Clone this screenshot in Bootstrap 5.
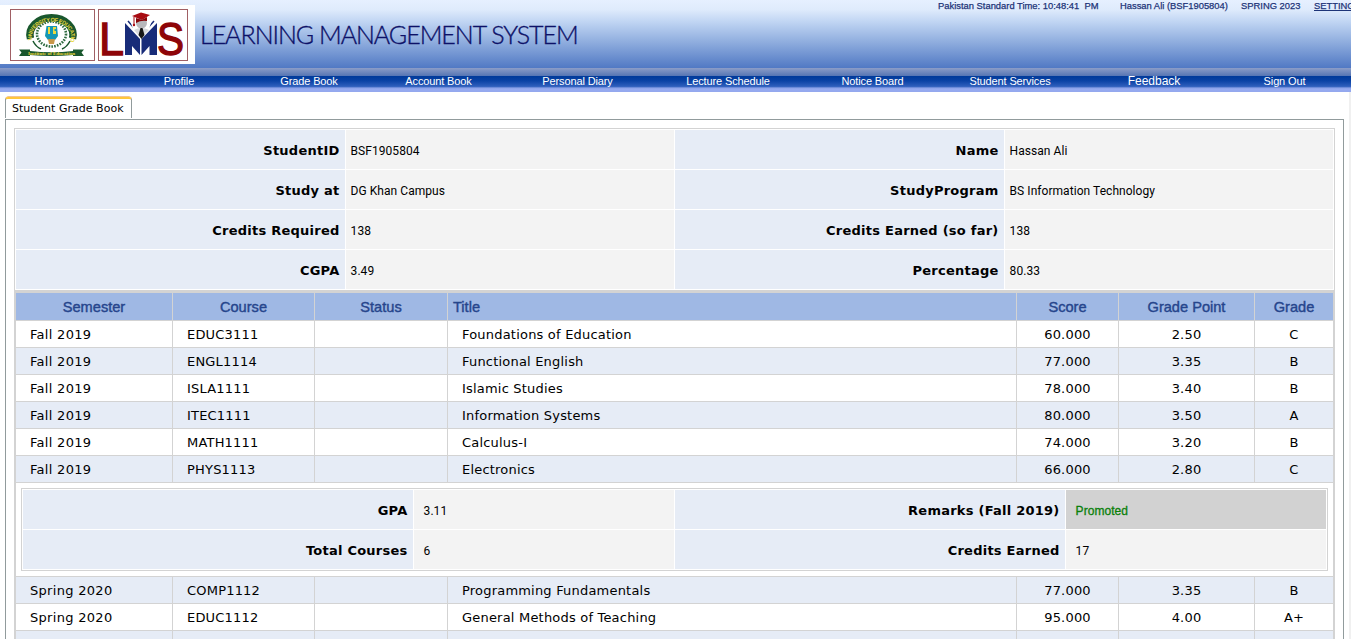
<!DOCTYPE html>
<html lang="en">
<head>
<meta charset="utf-8">
<title>Learning Management System</title>
<link href="https://cdn.jsdelivr.net/npm/bootstrap@5.3.0/dist/css/bootstrap.min.css" rel="stylesheet">
<style>
html,body{height:639px;overflow:hidden}
body{font-family:"DejaVu Sans",sans-serif;font-size:13px;color:#000;background:#fff}
.top-banner{height:68px;background:linear-gradient(#e6f0ff 0,#dfebfc 14%,#c0d5f3 32%,#8fadde 62%,#5179c4 100%)}
.logo-strip{width:195px;height:59px;margin-top:5px;padding:4px 0 0 10px;gap:3px}
.logo-frame{height:52px;border:1px solid #a05f64}
.logo-frame svg{overflow:visible}
.site-title{font:300 25px/30px Lato,sans-serif;color:#0d1168;margin:19px 0 0 5px;letter-spacing:-1.02px;-webkit-text-stroke:.35px #0d1168}
.session-info{font:9.4px/12px "Liberation Sans",sans-serif;color:#1d3478;width:413px;overflow:hidden;-webkit-text-stroke:.25px #1d3478}
.session-info span{flex:none}
.menu-shade{height:8px;background:linear-gradient(#8c9dc8,#5575b4)}
.main-menu{height:16px;background:linear-gradient(#003a9a 0,#0a42a5 30%,#2f5fbd 65%,#7f99e2 74%,#96aaf0 80%,#94a8ee 100%);font:11px/10px "Liberation Sans",sans-serif;letter-spacing:-.13px;color:#fff}
.main-menu a{color:#fff;text-decoration:none;text-align:center;flex:none}
.page-body{height:547px;padding:5px 5px 0 5px;border-right:2px solid #f0f0f0;overflow:hidden}
.tab-item{width:127px;height:21px;border:1px solid #919b9c;border-top:2px solid #ffc73c;border-bottom:0;border-radius:3px 3px 0 0;font-size:11px;line-height:19px;padding-left:6px;letter-spacing:.02px;box-shadow:0 -1px 0 -0.4px #e68b2c}
.tab-panel{width:1339px;height:560px;margin-top:1px;border:1px solid #919b9c;padding:8px}
.student-card{width:1321px;border:1px solid #d3d3d3;border-bottom:0;padding:1px 0 1px 1px}
.info-grid{display:grid;grid-template-columns:329px 328px 329px 328px;column-gap:1px;row-gap:1px;grid-auto-rows:39px}
.info-grid>*{display:flex;align-items:center;padding:3px 5px 0}
.lab{background:#e6ecf6;justify-content:flex-end;font-weight:700;letter-spacing:.24px}
.val{background:#f3f3f3;font:12px Roboto,sans-serif;letter-spacing:.05px}
.info-grid>.lab{padding-right:5.5px}
.info-grid>.val{padding-left:4.6px}
.grades{width:1321px;border-left:2px solid #d3d3d3;border-right:2px solid #d3d3d3;border-top:3px solid #d3d3d3}
.grow{display:grid;grid-template-columns:157px 142px 133px 569px 102px 136px 78px;height:27px;border-bottom:1px solid #d3d3d3;letter-spacing:.2px}
.grow>*{border-right:1px solid #d3d3d3;line-height:28px;height:26px;text-align:center}
.grow>:last-child{border-right:0}
.grow>:nth-child(-n+4){text-align:left;padding-left:14px}
.grow>:nth-child(1){letter-spacing:.3px}
.grow.alt{background:#e6ecf6}
.grow.ghead{height:28px;background:#9fb8e4;color:#26458c;font:14.6px "Liberation Sans",sans-serif;letter-spacing:0;-webkit-text-stroke:.4px #26458c}
.grow.ghead>*{line-height:28px;height:27px;text-align:center;padding-left:0;letter-spacing:0}
.grow.ghead>:nth-child(4){text-align:left;padding-left:5px}
.sem-wrap{padding:5px;height:94px;border-bottom:1px solid #d3d3d3}
.sem-box{border:1px solid #d3d3d3;padding:1px;height:83px}
.sem-box .info-grid{grid-template-columns:390px 260px 390px 260px}
.sem-box .info-grid>.val{padding-left:9.6px}
.promo{background:#d2d2d2!important;color:#0a800a;-webkit-text-stroke:.3px #0a800a;font-family:"Liberation Sans",sans-serif!important}
</style>
</head>
<body>
<header class="top-banner d-flex">
  <div class="logo-strip bg-white d-flex">
    <div class="logo-frame" style="width:85px">
      <svg width="83" height="50" viewBox="0 0 83 50" class="d-block">
        <path d="M19.500 28.500A21.500 17 0 1 1 61.500 28.500" fill="none" stroke="#19572d" stroke-width="7.500"/>
        <path d="M22 31q3 6 8 8M59 31q-3 6-8 8" fill="none" stroke="#19572d" stroke-width="1.500"/>
        <ellipse cx="40.500" cy="24" rx="14.500" ry="12.500" fill="none" stroke="#2e6a40" stroke-width="2.600" stroke-dasharray="1.600 1.200"/>
        <path id="sealArc" d="M21.500 30A19.500 15 0 1 1 59.500 30" fill="none"/>
        <text font-family="Liberation Sans" font-weight="700" font-size="5.500" fill="#e9d83d"><textPath href="#sealArc" textLength="66">UNIVERSITY OF EDUCATION</textPath></text>
        <path d="M35.500 16h10.500l1 10-3 4h-7l-3-4z" fill="#1597b5"/>
        <path d="M37 29h7l-1 5h-5z" fill="#c8974a"/><path d="M37 17h2v7h-2zM42 17h3v2h-1.500v2h1.500v3h-3z" fill="#ecd93e"/>
        <path d="M8 39.500h11v1.500q21.500 2.500 43 0v-1.500h11l-2.500 3 2.500 3.500H62v-1q-21.500 2-43 0v1H8l2.500-3.500z" fill="#19572d"/>
        <text x="17" y="45" font-family="Liberation Serif" font-size="4.500" font-weight="700" fill="#ecd93e" textLength="47" lengthAdjust="spacingAndGlyphs">Institute of Education</text>
      </svg>
    </div>
    <div class="logo-frame" style="width:90px">
      <svg width="88" height="50" viewBox="0 0 88 50" class="d-block">
        <text x="0" y="44.500" font-family="Liberation Sans" font-size="47" fill="#8e0508" stroke="#8e0508" stroke-width="1.400" textLength="25" lengthAdjust="spacingAndGlyphs">L</text>
        <text x="58" y="44.500" font-family="Liberation Sans" font-size="47" fill="#8e0508" stroke="#8e0508" stroke-width="1.400" textLength="27" lengthAdjust="spacingAndGlyphs">S</text>
        <path d="M26 13l15 16v16l-8-9v9h-7z" fill="#182c79"/><path d="M58 13L42.500 29v16l8-9v9H58z" fill="#182c79"/>
        <path d="M29 11l12 14M55 11L42.500 25" stroke="#182c79" stroke-width="1.500"/>
        <path d="M31 10l10 14L53 10l-3 9-8 9-8-9z" fill="#fff"/>
        <circle cx="42.500" cy="13" r="5.500" fill="#b8b8bc"/><path d="M35 20q7.500-4 15 0l-8 8z" fill="#d7d8dc"/>
        <path d="M41.500 18h2l2 7-3 4-3-4z" fill="#161616"/>
        <path d="M33 6l9-3.500L51 5l-8 5z" fill="#a80c12"/><path d="M37 8l6 2 5-3v4q-6-1-11 2z" fill="#870509"/>
        <path d="M35 7v7" stroke="#a80c12"/><circle cx="35" cy="15" r="1.200" fill="#a80c12"/>
      </svg>
    </div>
  </div>
  <h1 class="site-title text-nowrap">LEARNING MANAGEMENT SYSTEM</h1>
  <div class="session-info ms-auto d-flex text-nowrap">
    <span style="width:182px">Pakistan Standard Time: 10:48:41&nbsp; PM</span><span style="width:121px">Hassan Ali (BSF1905804)</span><span style="width:73px">SPRING 2023</span><span><u>SETTINGS</u></span>
  </div>
</header>
<div class="menu-shade"></div>
<nav class="main-menu d-flex">
  <a href="#" class="me-3" style="width:98px">Home</a><a href="#" style="width:130px">Profile</a><a href="#" style="width:130px">Grade Book</a><a href="#" style="width:129px">Account Book</a><a href="#" style="width:149px">Personal Diary</a><a href="#" style="width:152px">Lecture Schedule</a><a href="#" style="width:137px">Notice Board</a><a href="#" style="width:138px">Student Services</a><a href="#" style="width:150px;font-size:12px;letter-spacing:0">Feedback</a><a href="#" style="width:111px">Sign Out</a>
</nav>
<main class="page-body">
  <div class="tab-item">Student Grade Book</div>
  <section class="tab-panel">
    <div class="student-card">
      <div class="info-grid">
        <div class="lab">StudentID</div><div class="val">BSF1905804</div><div class="lab">Name</div><div class="val">Hassan Ali</div>
        <div class="lab">Study at</div><div class="val">DG Khan Campus</div><div class="lab">StudyProgram</div><div class="val">BS Information Technology</div>
        <div class="lab">Credits Required</div><div class="val">138</div><div class="lab">Credits Earned (so far)</div><div class="val">138</div>
        <div class="lab">CGPA</div><div class="val">3.49</div><div class="lab">Percentage</div><div class="val">80.33</div>
      </div>
    </div>
    <div class="grades">
      <div class="grow ghead"><div>Semester</div><div>Course</div><div>Status</div><div>Title</div><div>Score</div><div>Grade Point</div><div>Grade</div></div>
      <div class="grow"><div>Fall 2019</div><div>EDUC3111</div><div></div><div>Foundations of Education</div><div>60.000</div><div>2.50</div><div>C</div></div>
      <div class="grow alt"><div>Fall 2019</div><div>ENGL1114</div><div></div><div>Functional English</div><div>77.000</div><div>3.35</div><div>B</div></div>
      <div class="grow"><div>Fall 2019</div><div>ISLA1111</div><div></div><div>Islamic Studies</div><div>78.000</div><div>3.40</div><div>B</div></div>
      <div class="grow alt"><div>Fall 2019</div><div>ITEC1111</div><div></div><div>Information Systems</div><div>80.000</div><div>3.50</div><div>A</div></div>
      <div class="grow"><div>Fall 2019</div><div>MATH1111</div><div></div><div>Calculus-I</div><div>74.000</div><div>3.20</div><div>B</div></div>
      <div class="grow alt"><div>Fall 2019</div><div>PHYS1113</div><div></div><div>Electronics</div><div>66.000</div><div>2.80</div><div>C</div></div>
      <div class="sem-wrap"><div class="sem-box"><div class="info-grid">
        <div class="lab">GPA</div><div class="val">3.11</div><div class="lab">Remarks (Fall 2019)</div><div class="val promo">Promoted</div>
        <div class="lab">Total Courses</div><div class="val">6</div><div class="lab">Credits Earned</div><div class="val">17</div>
      </div></div></div>
      <div class="grow alt"><div>Spring 2020</div><div>COMP1112</div><div></div><div>Programming Fundamentals</div><div>77.000</div><div>3.35</div><div>B</div></div>
      <div class="grow"><div>Spring 2020</div><div>EDUC1112</div><div></div><div>General Methods of Teaching</div><div>95.000</div><div>4.00</div><div>A+</div></div>
      <div class="grow alt"><div></div><div></div><div></div><div></div><div></div><div></div><div></div></div>
    </div>
  </section>
</main>
<script src="https://cdn.jsdelivr.net/npm/bootstrap@5.3.0/dist/js/bootstrap.bundle.min.js"></script>
</body>
</html>
